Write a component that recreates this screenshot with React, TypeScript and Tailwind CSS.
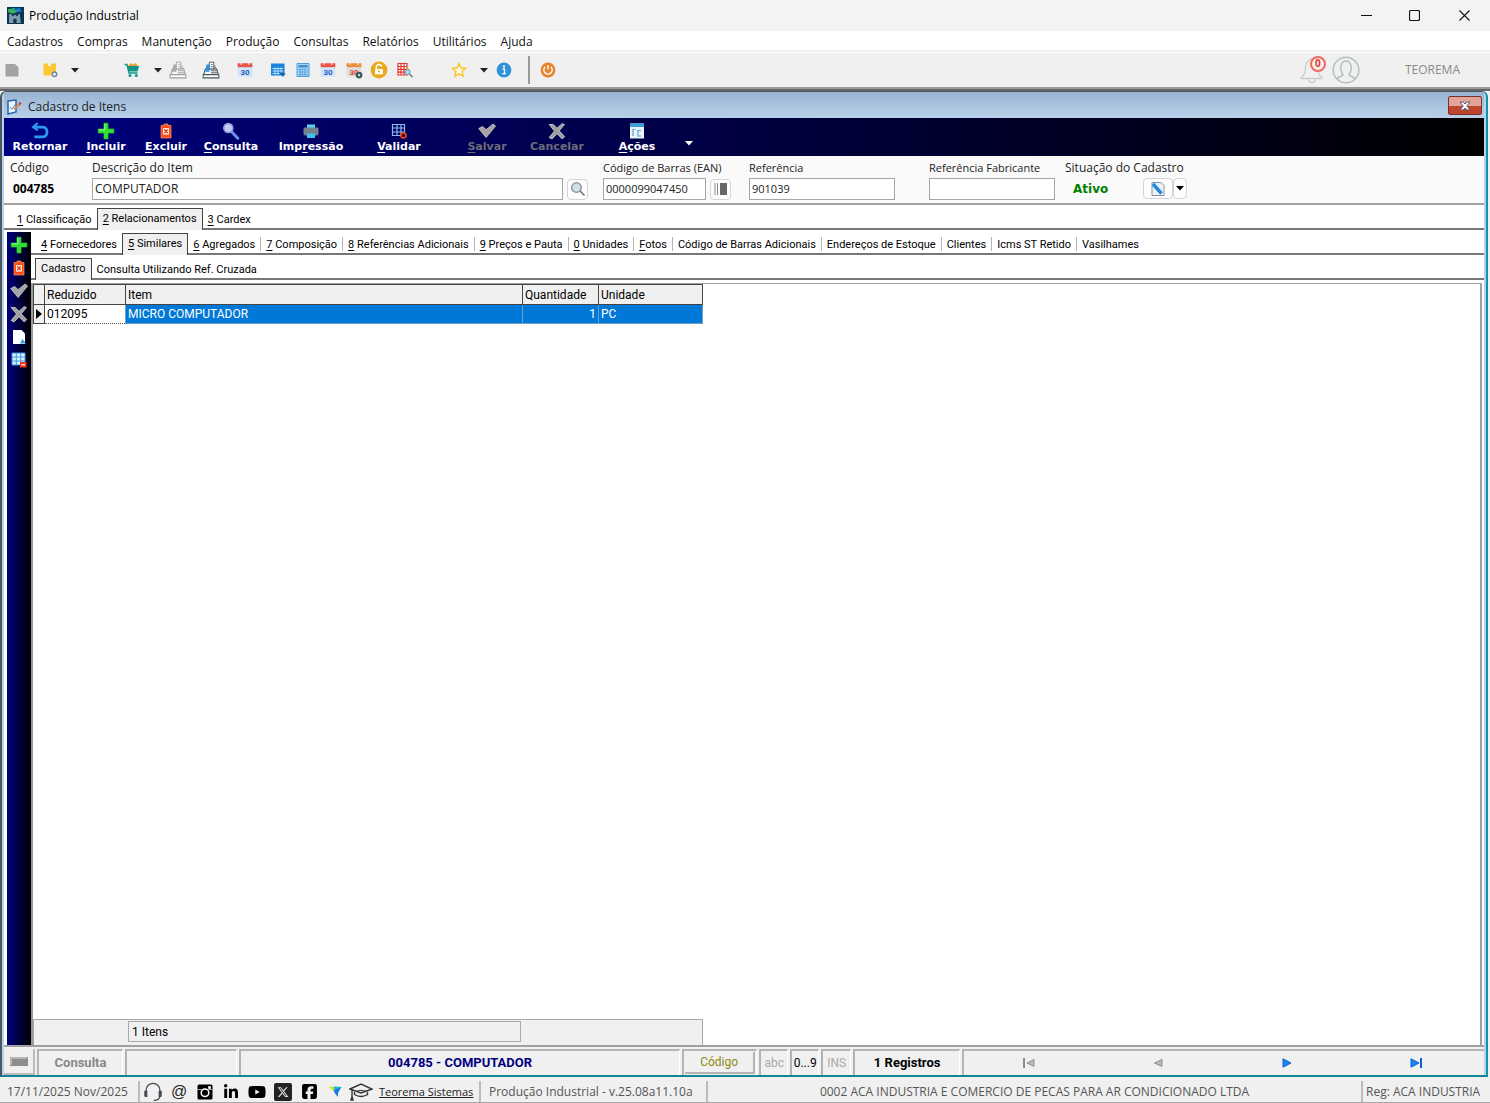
import { ReactNode } from "react";
import { FaLinkedinIn, FaYoutube, FaXTwitter, FaSquareFacebook } from "react-icons/fa6";

interface IconProps {
  children: ReactNode;
  box?: string;
  className?: string;
}

function Icon({ children, box = "0 0 16 16", className = "size-4" }: IconProps) {
  return (
    <svg viewBox={box} className={`${className} shrink-0`} fill="none" aria-hidden="true">
      {children}
    </svg>
  );
}

// "&Incluir" -> underlined I followed by "ncluir"
function Mnemonic({ text }: { text: string }) {
  const at = text.indexOf("&");
  if (at < 0) return <span>{text}</span>;
  return (
    <span>
      {text.slice(0, at)}
      <u className="underline-offset-2">{text[at + 1]}</u>
      {text.slice(at + 2)}
    </span>
  );
}

const Caret = ({ className = "text-[#222]" }: { className?: string }) => (
  <Icon box="0 0 8 5" className={`w-2 h-[5px] ${className}`}>
    <path d="M0 0h8L4 4.6z" fill="currentColor" />
  </Icon>
);

const PlusIcon = () => (
  <Icon className="size-[18px]">
    <path d="M6.2 1h3.6v5.200H15v3.600H9.800V15H6.200V9.800H1V6.200h5.200z" fill="#2fe02f" stroke="#2fc43a" strokeWidth=".6" />
    <path d="M7 1.800v5.200H1.800" stroke="#a5f7a0" strokeWidth=".8" />
  </Icon>
);

const DeleteIcon = () => (
  <Icon>
    <path d="M3 2.500h3V1h4v1.500h3V15H3z" fill="#ff4a12" stroke="#ffb08c" strokeWidth=".6" />
    <path d="M5 5h6v6.600H5z" fill="#ffe9df" />
    <path d="M6.300 6.500l3.400 3.600m0-3.600l-3.400 3.600" stroke="#e33400" strokeWidth="1.300" />
  </Icon>
);

const CheckIcon = () => (
  <Icon className="size-[18px]">
    <path d="M.6 5.800L4.200 4l3 2.800L13.400 1.800l2.200 1.800L7.200 13.800z" fill="#a4a4a4" stroke="#d2d2d2" strokeWidth=".7" />
  </Icon>
);

const CrossIcon = () => (
  <Icon className="size-[18px]">
    <path
      d="M1 2.200h3.600L8 5.600l4.400-4.100 2.200.7L10 7.800l4.800 5.200-2.200 2L8 10.400 3.600 15 1 13.800 5.800 8z"
      fill="#9d9d9d"
      stroke="#dedede"
      strokeWidth=".7"
    />
  </Icon>
);

const ReturnIcon = () => (
  <Icon className="size-[18px]">
    <path d="M2.500 4.500h8c5 0 5 8.700 0 8.700H3" stroke="#2b9cf0" strokeWidth="2.500" />
    <path d="M6 1L1.800 4.500 6 7.500" stroke="#2b9cf0" strokeWidth="1.800" />
  </Icon>
);

const LensIcon = () => (
  <Icon className="size-[18px]">
    <path d="M8.600 8.600l5.400 5.900" stroke="#6f8df0" strokeWidth="2.600" strokeLinecap="round" />
    <circle cx="5.600" cy="5.400" r="4" fill="#c3cdf3" stroke="#8e9bd6" strokeWidth="1.400" />
  </Icon>
);

const PrinterIcon = () => (
  <Icon>
    <path d="M4 1.500h8v4H4z" fill="#58d5f5" />
    <rect x=".5" y="4.500" width="15" height="8" rx="1.400" fill="#75828d" />
    <path d="M4 10.500h8v4.500H4z" fill="#3fc4ee" />
  </Icon>
);

const ValidateIcon = () => (
  <Icon>
    <path d="M1.500 1.500h12v11h-12zM1.500 5h12M1.500 9h12M6 1.500v11M10 1.500v11" stroke="#8fb7ef" strokeWidth="1.200" />
    <circle cx="12.500" cy="12.500" r="2.500" fill="#310020" stroke="#f4431a" strokeWidth="1.600" />
  </Icon>
);

const ActionsIcon = () => (
  <Icon>
    <path d="M1 .5h14v15H1z" fill="#e9f3fa" />
    <path d="M1 .5h14V4H1z" fill="#38a0dc" />
    <path d="M6.500 6.500H4v6.500M12 7.500H9V13h3" stroke="#5ba5cf" strokeWidth="1.200" />
  </Icon>
);

const DocIcon = () => (
  <Icon>
    <path d="M2 1h8.500L14 4.500V15H2z" fill="#fff" />
    <path d="M11.500 10l3.500 4.500H9z" fill="#3b94dd" />
  </Icon>
);

const GridDeleteIcon = () => (
  <Icon>
    <path d="M1 1h13v12H1z" fill="#d9efff" />
    <path d="M1 1h13v12H1zM1 5h13M1 9h13M5.300 1v12M9.700 1v12" stroke="#3c9ae0" />
    <path d="M9 10h6.500v5.500H9z" fill="#f43a14" />
    <path d="M10.500 12.700h3.500" stroke="#fff" strokeWidth="1.200" />
  </Icon>
);

function CalendarIcon({ top, body, ink, gear }: { top: string; body: string; ink: string; gear?: boolean }) {
  return (
    <Icon className="size-[18px]">
      <path d="M1.500 2.500h13V14h-13z" fill={body} />
      <path d="M1.500 2h13v3.500h-13z" fill={top} />
      <path d="M4.500 1v2.500M11.500 1v2.500" stroke="#fff" strokeWidth=".8" />
      <text x="8" y="12.300" textAnchor="middle" className="font-[Roboto] text-[7px] font-bold" fill={ink}>
        30
      </text>
      {gear && <circle cx="12.500" cy="12.500" r="2" fill="#eee" stroke="#3f5963" strokeWidth="2" />}
    </Icon>
  );
}

function RegisterIcon({ on }: { on?: boolean }) {
  const line = on ? "#46565f" : "#9b9b9b";
  return (
    <Icon className="size-[18px]">
      <path d="M3 7h10l1.500 5h-13z" fill="#f4f4f4" stroke={line} strokeWidth=".9" />
      <path d="M1 12.300h14V15H1z" fill="#fff" stroke={line} strokeWidth=".9" />
      <path d="M6.500 1h4v6h-4z" fill="#fff" stroke={line} strokeWidth=".8" />
      <path d="M4 3h3l-.5 6.500H2.800z" fill={on ? "#2f8fe0" : "#aaa"} />
      <path d="M8 8.700h5M8 10.500h5.500M8 3h1.500M8 5h1.500M11.500 4v3" stroke={line} strokeWidth=".8" />
    </Icon>
  );
}

const mainTools = [
  {
    name: "Documento",
    cls: "ml-1 w-4",
    icon: (
      <Icon>
        <path d="M1.500 2H11l3.500 3.500V14.500h-13z" fill="#a3a3a3" />
      </Icon>
    ),
  },
  {
    name: "Itens",
    cls: "ml-5 w-5",
    icon: (
      <Icon>
        <path d="M1.500 1.500h4.500v3l1.500-1 1.500 1v-3h5V13.500h-12.500z" fill="#fbc735" />
        <circle cx="12.500" cy="12.300" r="2.200" fill="#fff" stroke="#7389a5" strokeWidth="1.600" />
      </Icon>
    ),
  },
  { name: "Mais itens", cls: "ml-[7px] w-4", icon: <Caret /> },
  {
    name: "Compras",
    cls: "ml-10 w-[18px]",
    icon: (
      <Icon>
        <path d="M4 4l3-3 2 1.500 3-1.500 2 3.500z" fill="#f29a2e" />
        <path d="M.5 2.500h2.500L5 11h8.500" stroke="#129486" strokeWidth="1.400" />
        <path d="M3.300 4h12L13.500 9.500H4.800z" fill="#129486" />
        <circle cx="6" cy="13.500" r="1.500" fill="#129486" />
        <circle cx="12.300" cy="13.500" r="1.500" fill="#129486" />
      </Icon>
    ),
  },
  { name: "Mais compras", cls: "ml-[9px] w-4", icon: <Caret /> },
  { name: "Caixa", cls: "ml-[3px] w-[18px]", icon: <RegisterIcon /> },
  { name: "Abrir caixa", cls: "ml-[15px] w-[18px]", icon: <RegisterIcon on /> },
  { name: "Agenda", cls: "ml-4 w-[18px]", icon: <CalendarIcon top="#ec5345" body="#cfe4fb" ink="#1d5fb8" /> },
  {
    name: "Planejamento",
    cls: "ml-[15px] w-[18px]",
    icon: (
      <Icon>
        <path d="M1 1.500h13.500v12H1z" fill="#1c84dd" />
        <path d="M2.500 6.500h10.500M2.500 9h10.500M2.500 11.500h7M5 5.500v7M8 5.500v7M11 5.500v5" stroke="#d4eafc" strokeWidth=".8" />
        <path d="M9.500 11h6l-2.500 4z" fill="#1565a8" />
      </Icon>
    ),
  },
  {
    name: "Calculadora",
    cls: "ml-2 w-4",
    icon: (
      <Icon>
        <path d="M2 1.500h12v13H2z" fill="#a9d4f3" stroke="#4b9fda" />
        <path d="M3.500 3h9v2.500h-9z" fill="#3c8fd0" />
        <path d="M4 7.500h8.500M4 10h8.500M4 12.500h8.500" stroke="#3f93d2" strokeWidth="1.300" strokeDasharray="1.700 .9" />
      </Icon>
    ),
  },
  { name: "Calendário", cls: "ml-2 w-[18px]", icon: <CalendarIcon top="#ec5345" body="#cfe4fb" ink="#1d5fb8" /> },
  { name: "Configurar calendário", cls: "ml-2 w-[18px]", icon: <CalendarIcon top="#ee8c3a" body="#dedede" ink="#e0412f" gear /> },
  {
    name: "Bloquear",
    cls: "ml-[7px] w-[18px]",
    icon: (
      <Icon className="size-[18px]">
        <circle cx="8" cy="8" r="7.500" fill="#e8ab1e" />
        <path d="M4.500 7.200h7v4.600h-7z" fill="#fff" />
        <path d="M5.700 7V5.500c0-3 4.600-3 4.600-.4" stroke="#fff" strokeWidth="1.300" />
        <circle cx="8" cy="9.400" r=".9" fill="#e8ab1e" />
      </Icon>
    ),
  },
  {
    name: "Pesquisar grade",
    cls: "ml-2 w-[18px]",
    icon: (
      <Icon>
        <path d="M1 1.500h9V13H1z" fill="#fff" />
        <path d="M1 1.500h9V13H1zM1 4.500h9M1 7.300h9M1 10.200h9M4 1.500v11.500M7 1.500v11.500" stroke="#e5342b" strokeWidth="1.200" />
        <path d="M9.500 4.500l4 4h-4z" fill="#f1b72d" />
        <circle cx="10.500" cy="10" r="2.600" fill="#a9dcf4" stroke="#6c97ad" />
        <path d="M12.500 12l3 3" stroke="#777" strokeWidth="1.500" />
      </Icon>
    ),
  },
  {
    name: "Favoritos",
    cls: "ml-9 w-[18px]",
    icon: (
      <Icon>
        <path
          d="M8 1.500l1.900 4.300 4.700.5-3.500 3.200 1 4.700L8 11.800l-4.100 2.400 1-4.700L1.400 6.300l4.700-.5z"
          fill="#fdf6dc"
          stroke="#f8c62b"
          strokeWidth="1.400"
        />
      </Icon>
    ),
  },
  { name: "Mais favoritos", cls: "ml-2 w-4", icon: <Caret /> },
  {
    name: "Informações",
    cls: "ml-1 w-4",
    icon: (
      <Icon>
        <circle cx="8" cy="8" r="7.400" fill="#2f93d8" />
        <circle cx="8" cy="4.400" r="1.100" fill="#fff" />
        <path d="M6.500 7h2v4.500M6.300 11.700h3.600" stroke="#fff" strokeWidth="1.300" />
      </Icon>
    ),
  },
];

const formTools = [
  { text: "Retornar", cls: "ml-1 w-16", icon: <ReturnIcon /> },
  { text: "&Incluir", cls: "ml-0.5 w-16", icon: <PlusIcon /> },
  { text: "&Excluir", cls: "w-14", icon: <DeleteIcon /> },
  { text: "&Consulta", cls: "ml-[3px] w-[68px]", icon: <LensIcon /> },
  { text: "Imp&ressão", cls: "ml-1.5 w-20", icon: <PrinterIcon /> },
  { text: "&Validar", cls: "ml-4 w-16", icon: <ValidateIcon /> },
  { text: "&Salvar", cls: "ml-6 w-16", icon: <CheckIcon />, off: true },
  { text: "Cancelar", cls: "ml-1.5 w-16", icon: <CrossIcon />, off: true },
  { text: "&Ações", cls: "ml-4 w-16", icon: <ActionsIcon /> },
];

const menus = ["Cadastros", "Compras", "Manutenção", "Produção", "Consultas", "Relatórios", "Utilitários", "Ajuda"];

const subTabs = [
  "&4 Fornecedores",
  "&5 Similares",
  "&6 Agregados",
  "&7 Composição",
  "&8 Referências Adicionais",
  "&9 Preços e Pauta",
  "&0 Unidades",
  "&Fotos",
  "Código de Barras Adicionais",
  "Endereços de Estoque",
  "Clientes",
  "Icms ST Retido",
  "Vasilhames",
];

function Tabs({ items, active, className }: { items: string[]; active: number; className: string }) {
  return (
    <div role="tablist" className={`flex h-[25px] border-b-2 border-[#777] pt-[3px] font-[Roboto,sans-serif] text-[11px] whitespace-nowrap ${className}`}>
      {items.map((t, i) => (
        <button
          key={t}
          role="tab"
          aria-selected={i === active}
          className={
            i === active
              ? "-mb-0.5 -ml-px border border-b-0 border-[#444] bg-[#f0f0f0] px-[5px]"
              : "mt-1 mb-0.5 border-r border-[#b5b5b5] px-[5px] last:border-r-0"
          }
        >
          <Mnemonic text={t} />
        </button>
      ))}
    </div>
  );
}

interface FieldProps {
  id: string;
  label: string;
  value: string;
  width: string;
  text?: string;
  children?: ReactNode;
}

function Field({ id, label, value, width, text = "text-[11px]", children }: FieldProps) {
  return (
    <div className={text}>
      <label htmlFor={id} className="block h-5 leading-5 whitespace-nowrap">
        {label}
      </label>
      <div className="flex items-center gap-1">
        <input id={id} defaultValue={value} className={`h-[22px] border border-[#a6a6a6] bg-white px-0.5 pb-0.5 ${width}`} />
        {children}
      </div>
    </div>
  );
}

const smallButton = "flex h-[21px] items-center justify-center rounded-[4px] border border-[#d4d4d4] bg-[#fdfdfd]";

function ItemForm() {
  return (
    <div className="flex h-[49px] shrink-0 border-b-2 border-[#a0a0a0] bg-[#fafafa] pt-0.5 pl-1.5 font-['Open_Sans',sans-serif] text-xs text-[#222]">
      <div className="w-[82px]">
        <div className="h-5 leading-5">Código</div>
        <div className="pl-[3px] leading-[22px] font-bold text-black">004785</div>
      </div>
      <div className="w-[511px]">
        <Field id="descricao" label="Descrição do Item" value="COMPUTADOR" width="w-[471px]" text="text-xs">
          <button aria-label="Pesquisar" className={`w-[21px] ${smallButton}`}>
            <Icon>
              <circle cx="6.500" cy="6.500" r="4.800" fill="#cfe0e2" stroke="#848e92" strokeWidth="1.300" />
              <path d="M10 10l4.500 4.500" stroke="#777" strokeWidth="1.700" />
            </Icon>
          </button>
        </Field>
      </div>
      <div className="w-[146px]">
        <Field id="ean" label="Código de Barras (EAN)" value="0000099047450" width="w-[103px]">
          <button aria-label="Código de barras" className={`w-[21px] ${smallButton}`}>
            <Icon>
              <path d="M2 2v12M4.500 2v12" stroke="#888" />
              <path d="M7 2h7v12H7z" fill="#666" />
            </Icon>
          </button>
        </Field>
      </div>
      <div className="w-[180px]">
        <Field id="referencia" label="Referência" value="901039" width="w-[146px]" />
      </div>
      <div className="w-[136px]">
        <Field id="fabricante" label="Referência Fabricante" value="" width="w-[126px]" />
      </div>
      <div>
        <div className="h-5 leading-5">Situação do Cadastro</div>
        <div className="flex items-center pl-2">
          <span className="w-[70px] font-['DejaVu_Sans',sans-serif] text-xs font-bold text-[#008000]">Ativo</span>
          <button aria-label="Editar situação" className={`w-[30px] ${smallButton}`}>
            <Icon>
              <path d="M2 1.500h9l3 3V14.500H2z" fill="#eef3f8" stroke="#8393a3" />
              <path d="M3 3l8.500 9.500" stroke="#2387dc" strokeWidth="3.400" />
            </Icon>
          </button>
          <button aria-label="Opções de situação" className={`w-[14px] ${smallButton}`}>
            <Caret className="text-black" />
          </button>
        </div>
      </div>
    </div>
  );
}

function ItemGrid() {
  const head = "border border-[#444] bg-[#f0f0f0] px-0.5 text-left font-normal";
  const cell = "border border-[#6f9fc9] px-0.5";
  return (
    <table className="w-[670px] table-fixed border-collapse font-[Roboto,sans-serif] text-xs">
      <colgroup>
        <col className="w-[11px]" />
        <col className="w-[81px]" />
        <col className="w-[397px]" />
        <col className="w-[76px]" />
        <col />
      </colgroup>
      <thead>
        <tr className="h-5">
          <th className={head} aria-label="Marcador" />
          <th className={head}>Reduzido</th>
          <th className={head}>Item</th>
          <th className={head}>Quantidade</th>
          <th className={head}>Unidade</th>
        </tr>
      </thead>
      <tbody>
        <tr className="h-[19px] bg-[#0078d7] text-white">
          <td className="border border-[#444] bg-[#f0f0f0] p-0">
            <Icon box="0 0 6 10" className="mx-auto h-2.5 w-1.5">
              <path d="M0 0l6 5-6 5z" fill="#000" />
            </Icon>
          </td>
          <td className="border border-dotted border-[#555] bg-white px-0.5 text-black">012095</td>
          <td className={cell}>MICRO COMPUTADOR</td>
          <td className={`text-right ${cell}`}>1</td>
          <td className={cell}>PC</td>
        </tr>
      </tbody>
    </table>
  );
}

const panel = "flex items-center justify-center border-t-2 border-l-2 border-[#b4b4b4] border-r border-r-white";

function StatusBar() {
  return (
    <div className="flex h-7 shrink-0 gap-0.5 bg-[#f0f0f0] pt-0.5 font-[Roboto,sans-serif] text-xs">
      <button aria-label="Teclado" className="flex w-[31px] items-center justify-center border-r-2 border-b-2 border-[#bbb]">
        <Icon box="0 0 18 9" className="h-[9px] w-[18px]">
          <path d="M0 0h18v9H0z" fill="#8d8d8d" />
          <path d="M1 8V1h16" stroke="#ddd" />
        </Icon>
      </button>
      <div className={`w-[86px] text-[13px] font-bold text-[#888] ${panel}`}>Consulta</div>
      <div className={`w-[112px] ${panel}`} />
      <div className={`flex-[440] text-[13px] font-bold text-[#000080] ${panel}`}>004785 - COMPUTADOR</div>
      <div className={`w-[75px] p-px ${panel}`}>
        <button className="h-full w-full border-r-2 border-b-2 border-[#b4b4b4] text-[#8a8a14]">Código</button>
      </div>
      <div className={`w-[29px] text-[#aaa] ${panel}`}>abc</div>
      <div className={`w-[29px] text-black ${panel}`}>0...9</div>
      <div className={`w-[30px] text-[#aaa] ${panel}`}>INS</div>
      <div className={`w-[107px] text-[13px] font-bold ${panel}`}>1 Registros</div>
      <div className="grid flex-[518] grid-cols-4 border-t-2 border-l-2 border-[#b4b4b4] pr-1">
        <button aria-label="Primeiro" className="flex items-center justify-center text-[#8d8d8d]">
          <Icon box="0 0 12 10" className="h-2.5 w-3">
            <path d="M1 0v10" stroke="currentColor" strokeWidth="2" />
            <path d="M11 1.500v7L4 5z" fill="#bbb" stroke="currentColor" />
          </Icon>
        </button>
        <button aria-label="Anterior" className="flex items-center justify-center text-[#8d8d8d]">
          <Icon box="0 0 10 10" className="size-2.5">
            <path d="M9 1.500v7L1.500 5z" fill="#bbb" stroke="currentColor" />
          </Icon>
        </button>
        <button aria-label="Próximo" className="flex items-center justify-center text-[#0a62d8]">
          <Icon box="0 0 10 10" className="size-2.5">
            <path d="M1 .8v8.400L9 5z" fill="#1f83ee" stroke="currentColor" />
          </Icon>
        </button>
        <button aria-label="Último" className="flex items-center justify-center text-[#0a62d8]">
          <Icon box="0 0 12 10" className="h-2.5 w-3">
            <path d="M1 .8v8.400L9 5z" fill="#1f83ee" stroke="currentColor" />
            <path d="M11 0v10" stroke="currentColor" strokeWidth="2" />
          </Icon>
        </button>
      </div>
    </div>
  );
}

const socials = [
  {
    name: "Suporte",
    icon: (
      <Icon className="size-5 text-[#444c54]">
        <path d="M2.500 8V6.500a5.500 5.500 0 0 1 11 0V8M13.500 11c0 3-2 3.700-5 3.700" stroke="currentColor" strokeWidth="1" />
        <path d="M1 7h2.500v5H2A1 1 0 0 1 1 11zM12.500 7H15v4a1 1 0 0 1-1 1h-1.500z" fill="currentColor" />
      </Icon>
    ),
  },
  { name: "E-mail", icon: <span className="font-['Liberation_Sans',sans-serif] text-base leading-4 text-[#222]">@</span> },
  {
    name: "Instagram",
    icon: (
      <Icon className="size-4">
        <rect x=".5" y=".5" width="15" height="15" rx="1.500" fill="#000" />
        <circle cx="8" cy="8.800" r="3.800" stroke="#fff" strokeWidth="1.500" />
        <path d="M11.500 2.500h2v2h-2zM1 5.500h3.500M11.500 5.500H15" fill="#fff" stroke="#fff" strokeWidth=".7" />
      </Icon>
    ),
  },
  { name: "LinkedIn", icon: <FaLinkedinIn className="size-4" /> },
  { name: "YouTube", icon: <FaYoutube className="size-[18px]" /> },
  {
    name: "X",
    icon: (
      <span className="flex size-[18px] items-center justify-center rounded-xs bg-[#222] text-[#ddd]">
        <FaXTwitter className="size-3" />
      </span>
    ),
  },
  {
    name: "Facebook",
    icon: <FaSquareFacebook className="size-[17px]" />,
  },
  {
    name: "Site",
    icon: (
      <Icon className="size-4">
        <path d="M1.500 3l6-.5L9 8z" fill="#c9e81b" />
        <path d="M7 2.500l8 .5-4 3-4-1z" fill="#13b8d8" />
        <path d="M6.500 6L14 3.500 11 9v4L8 9.500z" fill="#1479e0" />
      </Icon>
    ),
  },
  {
    name: "Treinamento",
    icon: (
      <Icon box="0 0 24 20" className="h-5 w-6">
        <path d="M1 7l11-5 11 5-11 4zM5.500 8.500v4c4 2.500 9 2.500 13 0v-4M3 8v7M2 18l1-3.500L4 18z" stroke="#333" strokeWidth="1.400" />
        <path d="M7 9.500c3-1.500 7-1.500 10 0" stroke="#333" />
      </Icon>
    ),
  },
];

function TaskBar() {
  return (
    <footer className="flex h-[25px] shrink-0 items-stretch border-b border-[#a8a8a8] bg-[#f0f0f0] pt-[3px] font-['Open_Sans',sans-serif] text-xs leading-[22px] whitespace-nowrap text-[#555]">
      <div className="w-[140px] border-r-2 border-[#bbb] pl-[7px]">17/11/2025 Nov/2025</div>
      <div className="flex text-black">
        {socials.map((s) => (
          <a key={s.name} href="#" aria-label={s.name} className="flex w-[26px] items-center justify-center">
            {s.icon}
          </a>
        ))}
      </div>
      <a href="#" className="ml-1 w-[103px] border-r-2 border-[#bbb] pl-px text-[11px] text-[#222] underline">
        Teorema Sistemas
      </a>
      <div className="w-[227px] border-r-2 border-[#bbb] pl-2">Produção Industrial - v.25.08a11.10a</div>
      <div className="min-w-0 flex-1 border-r-2 border-[#bbb] text-center">
        0002 ACA INDUSTRIA E COMERCIO DE PECAS PARA AR CONDICIONADO LTDA
      </div>
      <div className="w-[127px] pl-[3px]">Reg: ACA INDUSTRIA</div>
    </footer>
  );
}

function ItemWindow() {
  return (
    <section className="flex flex-1 flex-col rounded-t-md border-x-2 border-t border-b-2 border-[#4b5a60] border-r-[#0f95a5] border-b-[#0f8797] bg-[#b9d1ea] px-0.5">
      <header className="flex h-[26px] shrink-0 items-center gap-1.5 bg-linear-to-b from-[#98b4d2] to-[#b9d1ea] pt-[3px] pl-0.5 font-['Open_Sans',sans-serif] text-xs text-[#222]">
        <Icon>
          <path d="M2 2l8-1v12l-8 2z" fill="#eef6ff" stroke="#2b62b0" strokeWidth="1.500" />
          <path d="M4 8l2 2.500 3-5" stroke="#5a8fd8" />
          <path d="M8 10l6-5" stroke="#d98a3d" strokeWidth="2" />
          <circle cx="14" cy="4.500" r="1.300" fill="#c6442e" />
        </Icon>
        <h1 className="flex-1">Cadastro de Itens</h1>
        <button
          aria-label="Fechar janela"
          className="mr-0.5 mb-0.5 flex h-[19px] w-[34px] items-center justify-center rounded-xs border border-[#7b2f2b] bg-linear-to-b from-[#e2a398] from-50% to-[#c0432c] to-50%"
        >
          <Icon box="0 0 12 10" className="h-2.5 w-3">
            <path d="M1 1h3l2 2 2-2h3L7.800 5 11 9H8L6 7 4 9H1l3.200-4z" fill="#fff" stroke="#5a5f6b" />
          </Icon>
        </button>
      </header>

      <div className="flex h-[38px] shrink-0 bg-linear-to-r/srgb from-[#000080] to-black font-['DejaVu_Sans',sans-serif] text-[11px] font-bold text-white">
        {formTools.map((t) => (
          <button
            key={t.text}
            disabled={t.off}
            className={`flex flex-col items-center pt-1 leading-[14px] disabled:text-[#6b6b78] ${t.cls}`}
          >
            <span className="flex h-[18px] items-center">{t.icon}</span>
            <Mnemonic text={t.text} />
          </button>
        ))}
        <button aria-label="Mais ações" className="ml-2 flex w-6 items-center justify-center pt-3">
          <Caret className="text-white" />
        </button>
      </div>

      <ItemForm />

      <div className="flex flex-1 flex-col bg-white">
        <Tabs items={["&1 Classificação", "&2 Relacionamentos", "&3 Cardex"]} active={1} className="pl-2" />
        <div className="flex flex-1 border-b-2 border-[#a0a0a0] pl-[3px]">
          <aside className="mt-0.5 flex w-6 shrink-0 flex-col items-center gap-[5px] bg-linear-to-r/srgb from-[#000080] to-black pt-1">
            {[
              { name: "Incluir", icon: <PlusIcon /> },
              { name: "Excluir", icon: <DeleteIcon /> },
              { name: "Salvar", icon: <CheckIcon /> },
              { name: "Cancelar", icon: <CrossIcon /> },
              { name: "Novo", icon: <DocIcon /> },
              { name: "Limpar grade", icon: <GridDeleteIcon /> },
            ].map((b) => (
              <button key={b.name} aria-label={b.name} className="flex h-[18px] items-center">
                {b.icon}
              </button>
            ))}
          </aside>
          <div className="flex min-w-0 flex-1 flex-col">
            <Tabs items={subTabs} active={1} className="pl-[5px]" />
            <Tabs items={["Cadastro", "Consulta Utilizando Ref. Cruzada"]} active={0} className="pl-[5px]" />
            <div className="mt-[3px] mr-0.5 flex flex-1 flex-col border-x-2 border-t border-[#a0a0a0] border-l-[#999]">
              <div className="flex-1">
                <ItemGrid />
              </div>
              <div className="h-[26px] w-[670px] border border-b-0 border-[#a8a8a8] bg-[#f0f0f0] pt-px pl-[94px]">
                <input
                  aria-label="Total de itens"
                  readOnly
                  value="1 Itens"
                  className="block h-[21px] w-[393px] border border-[#a8a8a8] bg-[#f0f0f0] px-[3px] font-[Roboto,sans-serif] text-xs"
                />
              </div>
            </div>
          </div>
        </div>
      </div>
      <StatusBar />
    </section>
  );
}

export default function App() {
  return (
    <div className="flex min-h-screen flex-col bg-[#f0f0f0] text-black">
      <header className="flex h-[31px] shrink-0 items-center bg-[#f3f3f3] pl-[7px] font-['Open_Sans',sans-serif] text-xs">
        <Icon className="size-[17px]">
          <path d="M0 0h16v16H0z" fill="#0d3554" />
          <path d="M1 2l6-1 4 3-5 2-5-1z" fill="#35b558" />
          <path d="M6 2l6-1 2 3-4 1z" fill="#167bd0" />
          <path d="M2 15V7l2-1 1 3 3-2 1 2 3-3 1 9z" fill="#7e9bb0" />
          <path d="M6 15v-4h3v4z" fill="#12344e" />
        </Icon>
        <span className="ml-[5px] flex-1">Produção Industrial</span>
        <button aria-label="Minimizar" className="flex w-12 justify-center">
          <Icon box="0 0 11 11" className="size-[11px]">
            <path d="M0 5.500h11" stroke="#111" />
          </Icon>
        </button>
        <button aria-label="Maximizar" className="flex w-12 justify-center">
          <Icon box="0 0 11 11" className="size-[11px]">
            <rect x=".5" y=".5" width="10" height="10" rx="1.500" stroke="#111" strokeWidth="1.200" />
          </Icon>
        </button>
        <button aria-label="Fechar" className="flex w-[52px] justify-center">
          <Icon box="0 0 11 11" className="size-[11px]">
            <path d="M.5.500l10 10M10.500.500l-10 10" stroke="#111" strokeWidth="1.100" />
          </Icon>
        </button>
      </header>

      <nav className="flex h-[21px] shrink-0 items-center gap-3.5 border-b-2 border-[#f0f0f0] bg-white pt-0.5 pl-[7px] font-['Open_Sans',sans-serif] text-xs text-[#111]">
        {menus.map((m) => (
          <button key={m}>{m}</button>
        ))}
      </nav>

      <div className="flex h-[37px] shrink-0 items-center border-t border-b-2 border-t-white border-b-[#999] bg-[#f0f0f0] font-['Open_Sans',sans-serif] text-xs">
        {mainTools.map((t) => (
          <button key={t.name} aria-label={t.name} className={`flex justify-center ${t.cls}`}>
            {t.icon}
          </button>
        ))}
        <div className="ml-4 h-7 w-0.5 bg-[#999]" />
        <button aria-label="Sair" className="ml-2.5 flex w-4 justify-center">
          <Icon>
            <circle cx="8" cy="8" r="7.400" fill="#e98126" />
            <path d="M5.200 4.800a4.200 4.200 0 1 0 5.600 0M8 3v4.500" stroke="#fff" strokeWidth="1.400" />
          </Icon>
        </button>
        <div className="flex-1" />
        <button aria-label="Notificações" className="relative flex size-7 items-center justify-center">
          <Icon box="0 0 24 26" className="h-[27px] w-6">
            <path d="M9 3c0-2 5-2 5 0 5 2 3 11 5 14 1 2 3 2 3 4H1c0-2 2-2 3-4 2-3 0-12 5-14zM9 22c0 4 6 4 6 0" stroke="#ccc" strokeWidth="1.300" />
          </Icon>
          <span className="absolute top-0 right-0 flex size-4 items-center justify-center rounded-full border-2 border-[#ee6a60] bg-[#fbeeee] text-[10px] font-bold text-[#e8352b]">
            0
          </span>
        </button>
        <button aria-label="Usuário" className="ml-1.5 flex">
          <Icon box="0 0 28 28" className="size-7">
            <circle cx="14" cy="14" r="12.800" stroke="#b3bfc1" strokeWidth="1.500" />
            <path
              d="M5 23c1-3 5.500-2 6-4.500C7.500 14 8 5 14 5s6.500 9 3 13.500c.5 2.500 5 1.500 6 4.500"
              stroke="#b3bfc1"
              strokeWidth="1.500"
            />
          </Icon>
        </button>
        <span className="mr-[30px] ml-[45px] text-[#8a8a8a]">TEOREMA</span>
      </div>

      <main className="flex flex-1 flex-col border-t-2 border-[#666] pr-0.5 pb-px">
        <ItemWindow />
      </main>
      <TaskBar />
    </div>
  );
}
